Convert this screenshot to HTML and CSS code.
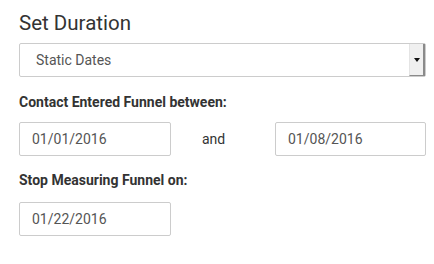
FILE: index.html
```html
<!DOCTYPE html>
<html>
<head>
<meta charset="utf-8">
<link rel="stylesheet" href="styles.css">
</head>
<body>
<div class="panel">
  <h2 class="title">Set Duration</h2>
  <div class="select">
    <span class="select-text">Static Dates</span>
    <span class="select-btn"><span class="tri"></span></span>
  </div>
  <label class="label label-first">Contact Entered Funnel between:</label>
  <div class="range">
    <div class="input">01/01/2016</div>
    <span class="and">and</span>
    <div class="input input-end">01/08/2016</div>
  </div>
  <label class="label label-second">Stop Measuring Funnel on:</label>
  <div class="input input-stop">01/22/2016</div>
</div>
</body>
</html>
```
FILE: styles.css
```css
html, body {
  margin: 0;
  padding: 0;
  background: #ffffff;
}
body {
  font-family: Roboto, "Liberation Sans", sans-serif;
  color: #333333;
}
.panel {
  width: 407px;
  padding: 11px 0 0 19px;
  display: flex;
  flex-direction: column;
  align-items: flex-start;
}
.title {
  margin: 0;
  font-size: 20.5px;
  line-height: 24px;
  font-weight: 400;
  color: #333333;
}
.select {
  margin-top: 8px;
  width: 407px;
  height: 34px;
  box-sizing: border-box;
  border: 1px solid #cccccc;
  border-radius: 2px;
  display: flex;
  align-items: stretch;
  background: #ffffff;
}
.select-text {
  flex: 1;
  display: flex;
  align-items: center;
  padding-left: 16px;
  font-size: 14px;
  color: #555555;
}
.select-btn {
  width: 13px;
  background: #f0f0f0;
  border-left: 1px solid #e4e4e4;
  border-right: 2px solid #8a8a8a;
  border-bottom: 1px solid #8a8a8a;
  display: flex;
  align-items: center;
  justify-content: center;
}
.tri {
  width: 0;
  height: 0;
  border-left: 3px solid transparent;
  border-right: 3px solid transparent;
  border-top: 4px solid #111111;
  margin-top: 1px;
}
.label {
  font-size: 14px;
  line-height: 20px;
  font-weight: 700;
  color: #333333;
}
.label-first {
  margin-top: 15px;
}
.label-second {
  margin-top: 14px;
}
.range {
  margin-top: 10px;
  width: 407px;
  display: flex;
  align-items: center;
}
.input {
  width: 152px;
  height: 34px;
  box-sizing: border-box;
  border: 1px solid #cccccc;
  border-radius: 2px;
  padding-left: 12px;
  display: flex;
  align-items: center;
  font-size: 14px;
  color: #555555;
}
.and {
  margin-left: 31px;
  font-size: 14px;
  color: #333333;
}
.input-end {
  margin-left: auto;
  width: 151px;
}
.input-stop {
  margin-top: 12px;
}
```
